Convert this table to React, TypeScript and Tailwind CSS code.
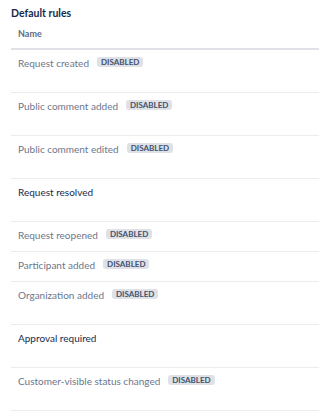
import React from "react";

type Rule = { name: string; enabled: boolean; tall: boolean };

const rules: Rule[] = [
  { name: "Request created", enabled: false, tall: true },
  { name: "Public comment added", enabled: false, tall: true },
  { name: "Public comment edited", enabled: false, tall: true },
  { name: "Request resolved", enabled: true, tall: true },
  { name: "Request reopened", enabled: false, tall: false },
  { name: "Participant added", enabled: false, tall: false },
  { name: "Organization added", enabled: false, tall: true },
  { name: "Approval required", enabled: true, tall: true },
  { name: "Customer-visible status changed", enabled: false, tall: true },
];

function Lozenge() {
  return (
    <span className="ml-[8px] mt-[1px] inline-block rounded-[3px] bg-[#dfe1e6] px-[4px] text-[8px] font-bold leading-[10px] text-[#42526e]">
      DISABLED
    </span>
  );
}

export default function App() {
  return (
    <div
      className="w-[319px] bg-white pl-[11px]"
      style={{ fontFamily: 'Lato, "Open Sans", sans-serif' }}
    >
      <h2 className="pt-[5px] text-[10.5px] font-bold leading-[16px] text-[#172b4d]">
        Default rules
      </h2>
      <div className="mt-[6px] border-b-2 border-[#dfe1e6] pb-[7px] pl-[7px] text-[9px] font-bold leading-[14px] text-[#5e6c84]">
        Name
      </div>
      {rules.map((r) => (
        <div
          key={r.name}
          className={`flex items-start border-b border-[#ebecf0] pl-[7px] pt-[6px] ${
            r.tall ? "h-[43px]" : "h-[30px]"
          }`}
        >
          <span
            className={`text-[10px] leading-[14px] ${
              r.enabled ? "text-[#172b4d]" : "text-[#6b778c]"
            }`}
          >
            {r.name}
          </span>
          {!r.enabled && <Lozenge />}
        </div>
      ))}
    </div>
  );
}
